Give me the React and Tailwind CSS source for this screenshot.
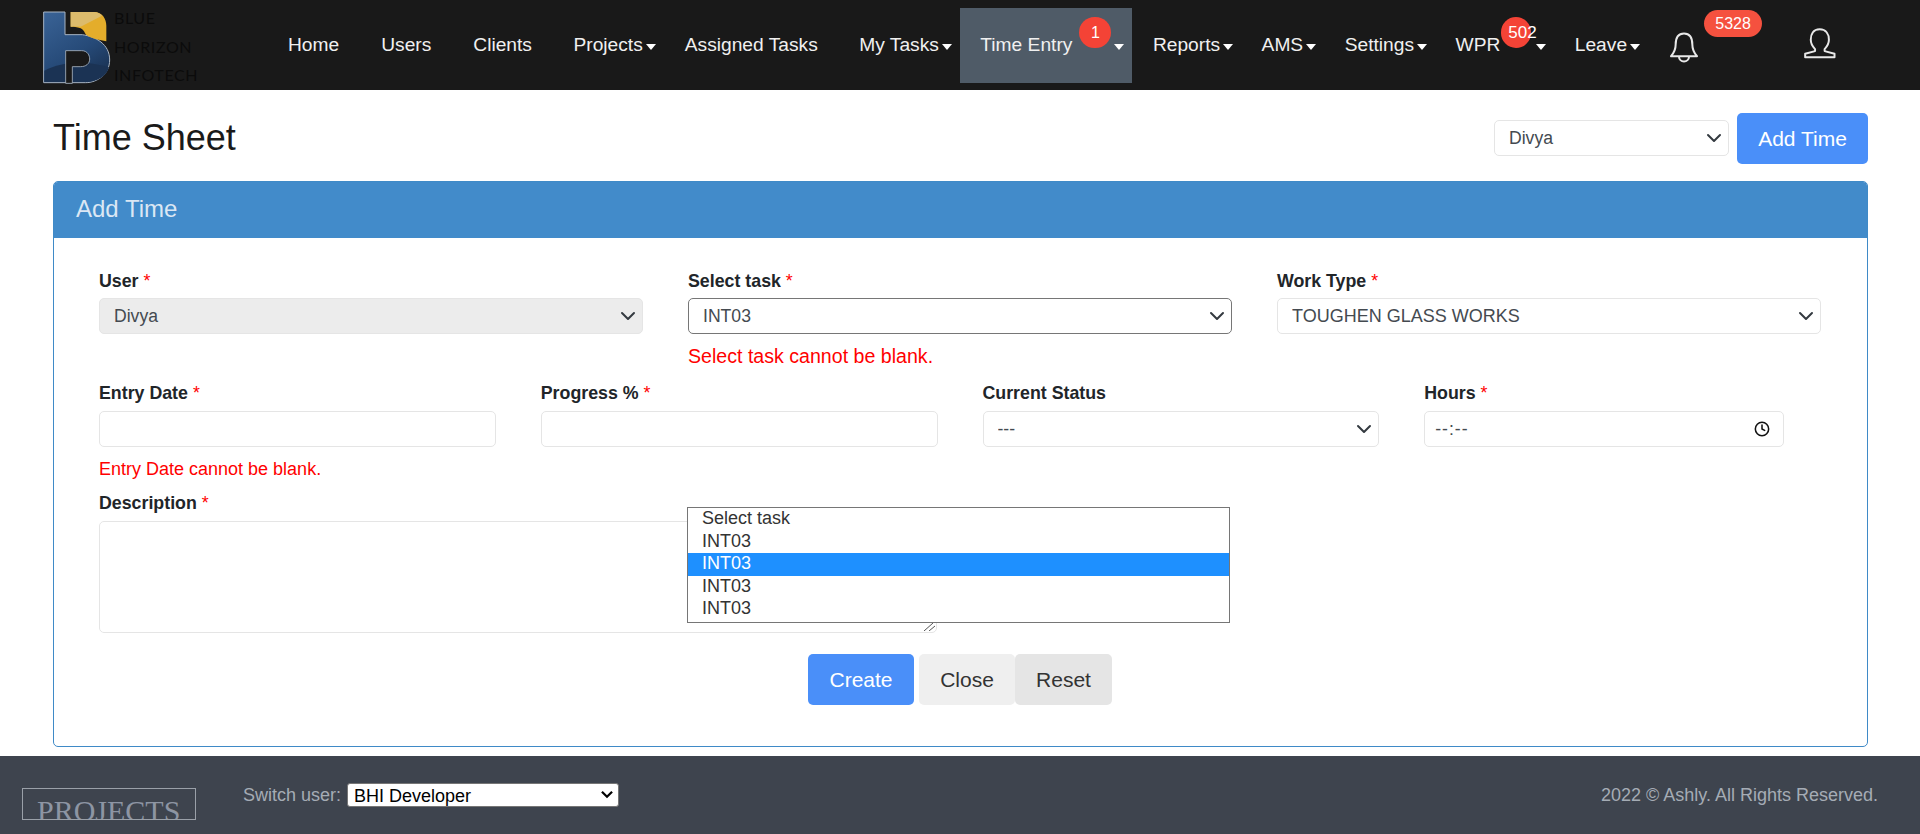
import React from "react";
import { Clock } from "lucide-react";

function Caret() {
  return <span className="inline-block ml-[3px] mt-[3px] w-0 h-0 border-t-[6px] border-t-white border-x-[5.5px] border-x-transparent" />;
}

function NavLink({ label }) {
  return <a className="px-[21px] flex items-center h-full text-[19.2px] text-[#f0f0f0] whitespace-nowrap">{label}</a>;
}

function NavDrop({ label, active, badge, badgeClass }) {
  return (
    <a className={`pl-[20.5px] pr-[8px] flex items-center h-full text-[19.2px] text-[#f0f0f0] whitespace-nowrap ${active ? "bg-[#4f5b67]" : ""}`}>
      {label}
      {badge && (
        <span className={`h-[31px] rounded-full bg-[#f44336] -translate-y-[13px] text-white flex items-center ${badgeClass}`}>
          {badge}
        </span>
      )}
      <Caret />
    </a>
  );
}

function Logo() {
  return (
    <svg viewBox="0 0 216 246" className="w-[72px] h-[82px] shrink-0">
      <defs>
        <linearGradient id="lb" x1="0" y1="0" x2="0.6" y2="1">
          <stop offset="0" stopColor="#3a6396" />
          <stop offset="0.65" stopColor="#264a78" />
          <stop offset="1" stopColor="#1b3558" />
        </linearGradient>
      </defs>
      <path d="M14 24H78V92H130C170 98 212 120 212 168C212 210 175 236 140 236H14Z" fill="url(#lb)" stroke="#a8b4c2" strokeWidth="3" />
      <path d="M16 200C70 170 150 170 210 190C205 215 175 234 140 234H16Z" fill="#1b3354" />
      <path d="M80 140H128C146 140 152 155 152 165C152 180 140 188 125 188H100V238H80Z" fill="#191919" stroke="#a8b4c2" strokeWidth="2.5" />
      <path d="M95 24H165C190 24 202 45 202 65V112C170 106 145 100 138 88C134 74 122 68 95 68Z" fill="#e4ad2b" />
      <path d="M95 24H165C175 24 183 28 189 35L125 68C115 67 105 68 95 68Z" fill="#dcbb6c" />
    </svg>
  );
}

function Bell() {
  return (
    <svg viewBox="30 65 90 95" className="w-[30px] h-[32px]" fill="none" stroke="#e8e8e8" strokeWidth="6" strokeLinejoin="round">
      <path d="M75 72C55 72 50 90 50 105C50 120 45 130 36 140H114C105 130 100 120 100 105C100 90 95 72 75 72Z" />
      <path d="M60 142A15 14 0 0 0 90 142" />
    </svg>
  );
}

function User() {
  return (
    <svg viewBox="430 52 102 94" className="w-[34px] h-[31px]" fill="none" stroke="#e8e8e8" strokeWidth="6" strokeLinejoin="round">
      <path d="M480 56C460 56 453 72 453 88C453 103 460 110 466 116V122L436 130V141H525V130L495 122V116C501 110 508 103 508 88C508 72 500 56 480 56Z" />
    </svg>
  );
}

function Chevron() {
  return (
    <svg viewBox="0 0 16 16" className="absolute right-[7px] top-1/2 -translate-y-1/2 w-[16px] h-[16px] pointer-events-none" fill="none" stroke="#343a40" strokeWidth="2" strokeLinecap="round" strokeLinejoin="round">
      <path d="m2 5 6 6 6-6" />
    </svg>
  );
}

function FormSelect({ value, className = "", textClass = "text-[17.6px]", wrapClass = "", children }) {
  return (
    <div className={`relative h-[36px] ${wrapClass}`}>
      <select defaultValue={value} className={`appearance-none w-full h-full rounded-[5px] border pl-[14px] pr-[30px] text-[#444a50] ${textClass} ${className || "border-[#e5e5e5] bg-white"}`}>
        <option value={value}>{value}</option>
      </select>
      <Chevron />
      {children}
    </div>
  );
}

function Label({ children, req = true }) {
  return (
    <label className="block h-[20px] leading-[22px] text-[17.8px] font-bold text-[#212529] mb-[8px] whitespace-nowrap">
      {children}
      {req && <span className="font-normal text-[#ff0000]"> *</span>}
    </label>
  );
}

function TextBox() {
  return <input type="text" className="block w-full h-[36px] rounded-[5px] border border-[#e5e5e5] bg-white" />;
}

const rowClass = "h-[22.6px] leading-[20px] pl-[14px]";

export default function App() {
  return (
    <div className="h-[834px] overflow-hidden bg-white font-['Liberation_Sans',Arial,sans-serif] text-[#212529]">
      <header className="h-[90px] bg-[#191919] flex">
        <div className="w-[267px] shrink-0 flex pl-[39px] pt-[4px]">
          <Logo />
          <div className="ml-[3px] font-['Lato',sans-serif] text-[16px] tracking-[0.6px] leading-[28.5px] text-[#0b0b0b]">
            <div>BLUE</div>
            <div>HORIZON</div>
            <div>INFOTECH</div>
          </div>
        </div>
        <nav className="flex items-start pt-[8px] flex-1">
          <div className="flex h-[75px]">
            <NavLink label="Home" />
            <NavLink label="Users" />
            <NavLink label="Clients" />
            <NavDrop label="Projects" />
            <NavLink label="Assigned Tasks" />
            <NavDrop label="My Tasks" />
            <NavDrop label="Time Entry" active badge="1" badgeClass="ml-[7px] w-[32px] justify-center text-[16px]" />
            <NavDrop label="Reports" />
            <NavDrop label="AMS" />
            <NavDrop label="Settings" />
            <NavDrop label="WPR" badge="502" badgeClass="ml-[1px] w-[30px] mr-[2px] pl-[7px] text-[17px]" />
            <NavDrop label="Leave" />
          </div>
          <div className="relative ml-[21px] mt-[23px]">
            <Bell />
            <span className="absolute left-[35px] top-[-21px] w-[58px] h-[27px] rounded-[14px] bg-[#f5513f] text-white text-[16px] flex items-center justify-center">5328</span>
          </div>
          <div className="ml-[104px] mt-[20px]">
            <User />
          </div>
        </nav>
      </header>

      <div className="pl-[53px] pr-[52px] pt-[23px] flex items-center justify-between">
        <h1 className="text-[36px] text-[#1a1a1a] font-normal leading-[49px] pb-[2px]">Time Sheet</h1>
        <div className="flex items-center gap-[8px]">
          <FormSelect value="Divya" wrapClass="w-[235px] -mt-[1px]" />
          <button className="w-[131px] h-[51px] rounded-[5px] bg-[#4a8ff9] text-white text-[21px]">Add Time</button>
        </div>
      </div>

      <section className="ml-[53px] mt-[17px] w-[1815px] h-[566px] border border-[#3f8ac7] rounded-[5px] overflow-hidden">
        <div className="h-[56px] bg-[#428bca] pl-[22px] pb-[2px] flex items-center text-[24px] text-[#dbe7f4]">Add Time</div>
        <div className="pl-[45px] pr-[46px] pt-[32px]">
          <div className="grid grid-cols-3 gap-x-[45px] h-[112px]">
            <div>
              <Label>User</Label>
              <FormSelect value="Divya" className="border-[#e5e5e5] bg-[#ececec]" />
            </div>
            <div>
              <Label>Select task</Label>
              <FormSelect value="INT03" className="border-[#767676] bg-white">
                <ul className="absolute left-[-1px] top-[209px] w-[543px] h-[116px] z-10 border border-[#767676] bg-white text-[18px] text-[#333]">
                  <li className={rowClass}>Select task</li>
                  <li className={rowClass}>INT03</li>
                  <li className={`${rowClass} bg-[#1e90ff] text-white`}>INT03</li>
                  <li className={rowClass}>INT03</li>
                  <li className={rowClass}>INT03</li>
                </ul>
              </FormSelect>
              <p className="mt-[10px] leading-[24px] text-[19.6px] text-[#ff0000]">Select task cannot be blank.</p>
            </div>
            <div>
              <Label>Work Type</Label>
              <FormSelect value="TOUGHEN GLASS WORKS" textClass="text-[18px]" />
            </div>
          </div>

          <div className="grid grid-cols-4 gap-x-[45px] h-[110px]">
            <div>
              <Label>Entry Date</Label>
              <div className="pt-[1px]"><TextBox /></div>
              <p className="mt-[11px] leading-[22px] text-[18px] text-[#ff0000]">Entry Date cannot be blank.</p>
            </div>
            <div>
              <Label>Progress %</Label>
              <div className="pt-[1px]"><TextBox /></div>
            </div>
            <div>
              <Label req={false}>Current Status</Label>
              <div className="pt-[1px]"><FormSelect value="---" /></div>
            </div>
            <div>
              <Label>Hours</Label>
              <div className="pt-[1px]">
                <div className="relative w-[360px] h-[36px]">
                  <input type="text" readOnly value="--:--" className="block w-full h-full rounded-[5px] border border-[#e5e5e5] pl-[10px] text-[17.6px] tracking-[1px] text-[#444a50]" />
                  <Clock size={16} strokeWidth={2.3} color="#111" className="absolute right-[14px] top-1/2 -translate-y-1/2" />
                </div>
              </div>
            </div>
          </div>

          <div className="w-[838px]">
            <Label>Description</Label>
            <div className="relative mt-[9px]">
              <textarea className="block w-[838px] h-[112px] rounded-[5px] border border-[#e5e5e5] resize-none" />
              <svg viewBox="0 0 14 10" className="absolute right-[2px] bottom-[2px] w-[14px] h-[10px]" fill="none" stroke="#555" strokeWidth="1">
                <path d="M3 10 12 2M8 10 14 5" />
              </svg>
            </div>
          </div>

          <div className="flex pl-[709px] mt-[21px]">
            <button className="w-[106px] h-[51px] rounded-[5px] bg-[#4a8ff9] text-white text-[21px]">Create</button>
            <button className="ml-[5px] w-[96px] h-[51px] rounded-[5px] bg-[#efefef] text-[#333] text-[21px]">Close</button>
            <button className="w-[97px] h-[51px] rounded-[5px] bg-[#e5e5e5] text-[#333] text-[21px]">Reset</button>
          </div>
        </div>
      </section>

      <footer className="mt-[8.5px] h-[79px] bg-[#3e444e] flex items-start">
        <div className="ml-[22px] mt-[32.5px] w-[174px] h-[32px] border border-[#9aa0a8] overflow-hidden pl-[14px] font-['Liberation_Serif',serif] text-[30px] leading-[44px] text-[#8d95a3] shrink-0">PROJECTS</div>
        <div className="ml-[47px] mt-[27.5px] flex items-center gap-[6px] text-[18px] leading-[24px] text-[#a5acb5]">
          <span>Switch user:</span>
          <div className="relative w-[272px] h-[24px]">
            <select defaultValue="BHI Developer" className="appearance-none w-full h-full pl-[6px] rounded-[3px] border border-[#767676] bg-white text-black text-[18px]">
              <option>BHI Developer</option>
            </select>
            <svg viewBox="0 0 12 8" className="absolute right-[5px] top-[7px] w-[14px] h-[9px] pointer-events-none" fill="none" stroke="#000" strokeWidth="2">
              <path d="m1.5 1.5 4.5 4.5 4.5-4.5" />
            </svg>
          </div>
        </div>
        <div className="ml-auto mr-[42px] mt-[27.5px] leading-[24px] text-[18px] text-[#a5acb5]">2022 © Ashly. All Rights Reserved.</div>
      </footer>
    </div>
  );
}
